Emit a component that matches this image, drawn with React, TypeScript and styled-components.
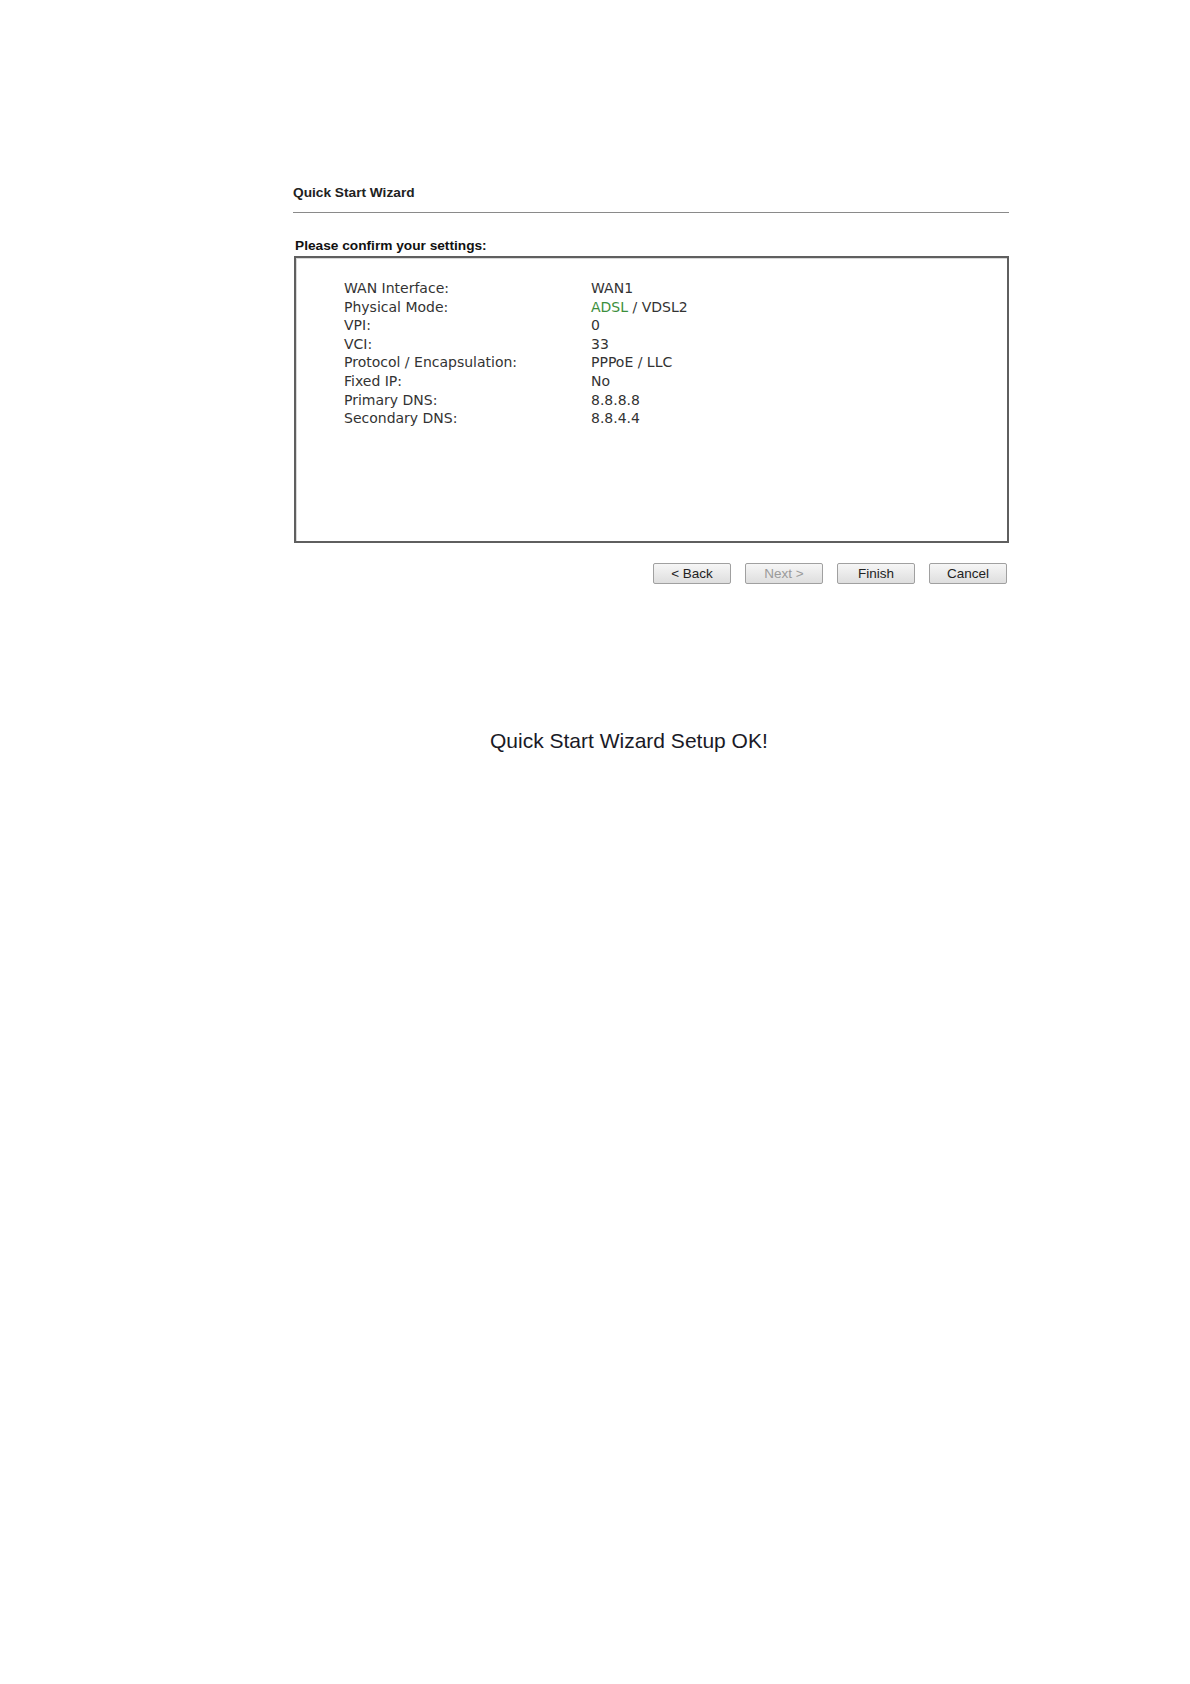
import React from 'react'
import styled, { createGlobalStyle } from 'styled-components'

interface Setting {
  label: string
  value: React.ReactNode
}

const GlobalStyle = createGlobalStyle`
  html, body {
    margin: 0;
    padding: 0;
    background: #ffffff;
  }
  body {
    font-family: "Liberation Sans", Arial, sans-serif;
    color: #222;
  }
`

const Page = styled.div`
  width: 1190px;
  min-height: 1684px;
  padding-top: 185px;
  box-sizing: border-box;
`

const Wizard = styled.div`
  width: 716px;
  margin-left: 293px;
`

const Title = styled.div`
  font-size: 13.7px;
  line-height: 15px;
  font-weight: 700;
  color: #222;
`

const Rule = styled.div`
  height: 1px;
  background: #8a8a8a;
  margin-top: 12px;
`

const Heading = styled.div`
  font-size: 13.7px;
  line-height: 15px;
  font-weight: 700;
  color: #111;
  margin: 25px 0 3px 2px;
`

const SettingsBox = styled.div`
  margin-left: 1px;
  width: 715px;
  height: 287px;
  box-sizing: border-box;
  border: 2px solid #5f5f5f;
  box-shadow: inset 1px 1px 0 #d8d8d8;
  padding: 21px 0 0 48px;
`

const Row = styled.div`
  display: grid;
  grid-template-columns: 247px 1fr;
  font-family: "DejaVu Sans", Verdana, sans-serif;
  font-size: 14px;
  line-height: 18.6px;
  color: #333;
`

const Green = styled.span`
  color: #3c8f3c;
`

const ButtonBar = styled.div`
  display: flex;
  justify-content: flex-end;
  gap: 14px;
  margin-top: 20px;
  padding-right: 2px;
`

const Button = styled.button<{ $disabled?: boolean }>`
  width: 78px;
  height: 21px;
  padding: 0;
  font-family: "Liberation Sans", Arial, sans-serif;
  font-size: 13.5px;
  color: ${p => (p.$disabled ? '#9a9a9a' : '#222')};
  background: linear-gradient(#f6f6f6, #dedede);
  border: 1px solid #a0a0a0;
  border-radius: 2px;
`

const Success = styled.div`
  margin: 145px 0 0 490px;
  font-family: "Liberation Sans", Arial, sans-serif;
  font-size: 21px;
  line-height: 24px;
  color: #1a1a26;
`

const App: React.FC = () => {
  const settings: Setting[] = [
    { label: 'WAN Interface:', value: 'WAN1' },
    { label: 'Physical Mode:', value: <><Green>ADSL</Green> / VDSL2</> },
    { label: 'VPI:', value: '0' },
    { label: 'VCI:', value: '33' },
    { label: 'Protocol / Encapsulation:', value: 'PPPoE / LLC' },
    { label: 'Fixed IP:', value: 'No' },
    { label: 'Primary DNS:', value: '8.8.8.8' },
    { label: 'Secondary DNS:', value: '8.8.4.4' }
  ]

  return (
    <Page>
      <GlobalStyle />
      <Wizard>
        <Title>Quick Start Wizard</Title>
        <Rule />
        <Heading>Please confirm your settings:</Heading>
        <SettingsBox>
          {settings.map(s => (
            <Row key={s.label}>
              <span>{s.label}</span>
              <span>{s.value}</span>
            </Row>
          ))}
        </SettingsBox>
        <ButtonBar>
          <Button>&lt; Back</Button>
          <Button $disabled>Next &gt;</Button>
          <Button>Finish</Button>
          <Button>Cancel</Button>
        </ButtonBar>
      </Wizard>
      <Success>Quick Start Wizard Setup OK!</Success>
    </Page>
  )
}

export default App
